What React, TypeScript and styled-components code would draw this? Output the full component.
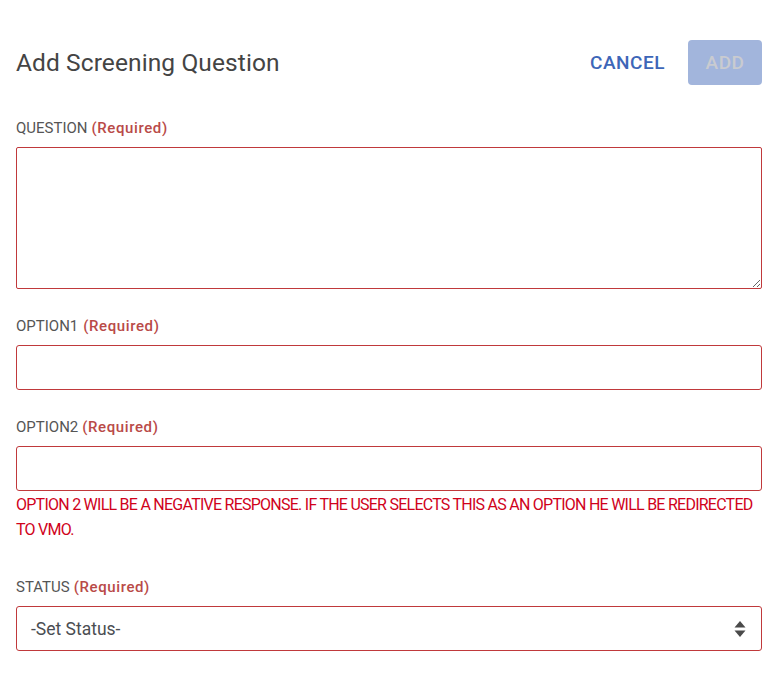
import React from "react";
import styled, { createGlobalStyle } from "styled-components";

const Global = createGlobalStyle`
  html, body { margin: 0; padding: 0; background: #fff; }
  body { font-family: Roboto, "Noto Sans", sans-serif; }
  * { box-sizing: border-box; }
`;

const Page = styled.div`
  width: 773px;
  padding: 40px 11px 30px 16px;
`;

const Header = styled.div`
  display: flex;
  align-items: center;
  justify-content: space-between;
  height: 45px;
`;

const Title = styled.h1`
  margin: 0;
  font-size: 24.5px;
  font-weight: 400;
  color: #444;
  letter-spacing: 0.1px;
`;

const Actions = styled.div`
  display: flex;
  align-items: center;
  gap: 23px;
`;

const TextButton = styled.button`
  border: none;
  background: none;
  padding: 0;
  font-family: inherit;
  font-size: 19px;
  font-weight: 500;
  color: #3d66b8;
  letter-spacing: 0.5px;
`;

const PrimaryButton = styled.button<{ $disabled?: boolean }>`
  width: 74px;
  height: 45px;
  border: none;
  border-radius: 4px;
  background: ${(p) => (p.$disabled ? "#a2b5dc" : "#3d66b8")};
  color: ${(p) => (p.$disabled ? "#c9cbd0" : "#fff")};
  font-family: inherit;
  font-size: 19px;
  font-weight: 500;
  letter-spacing: 0.5px;
`;

const Field = styled.div<{ $top: number }>`
  margin-top: ${(p) => p.$top}px;
  display: flex;
  flex-direction: column;
`;

const Label = styled.label`
  font-size: 15px;
  color: #555;
  line-height: 18px;
  margin-bottom: 10px;
`;

const Req = styled.span<{ $gap?: number }>`
  color: #b94a48;
  font-weight: 500;
  letter-spacing: 0.6px;
  margin-left: ${(p) => p.$gap ?? 4}px;
`;

const TextArea = styled.textarea`
  width: 100%;
  height: 142px;
  border: 1px solid #c0393b;
  border-radius: 2px;
  resize: vertical;
  font-family: inherit;
  outline: none;
`;

const Input = styled.input`
  width: 100%;
  height: 45px;
  border: 1px solid #c0393b;
  border-radius: 3px;
  font-family: inherit;
  outline: none;
`;

const Warning = styled.p`
  margin: 1px 0 0;
  font-size: 16px;
  line-height: 25px;
  color: #d0021b;
  letter-spacing: -0.75px;
`;

const SelectBox = styled.div`
  width: 100%;
  height: 45px;
  border: 1px solid #c0393b;
  border-radius: 3px;
  display: flex;
  align-items: center;
  justify-content: space-between;
  padding: 0 15px 0 14px;
  font-size: 17.5px;
  color: #4a4d52;
`;

export default function App() {
  return (
    <Page>
      <Global />
      <Header>
        <Title>Add Screening Question</Title>
        <Actions>
          <TextButton>CANCEL</TextButton>
          <PrimaryButton $disabled>ADD</PrimaryButton>
        </Actions>
      </Header>
      <Field $top={34}>
        <Label>
          QUESTION<Req>(Required)</Req>
        </Label>
        <TextArea />
      </Field>
      <Field $top={28}>
        <Label>
          OPTION1<Req $gap={5}>(Required)</Req>
        </Label>
        <Input />
      </Field>
      <Field $top={28}>
        <Label>
          OPTION2<Req>(Required)</Req>
        </Label>
        <Input />
        <Warning>
          OPTION 2 WILL BE A NEGATIVE RESPONSE. IF THE USER SELECTS THIS AS AN OPTION HE WILL BE REDIRECTED TO VMO.
        </Warning>
      </Field>
      <Field $top={36}>
        <Label>
          STATUS<Req>(Required)</Req>
        </Label>
        <SelectBox>
          <span>-Set Status-</span>
          <svg width="12" height="18" viewBox="0 0 12 18">
            <path d="M6 1 L11.5 7.5 H0.5 Z" fill="#4a4a4a" />
            <path d="M6 17 L11.5 10.5 H0.5 Z" fill="#4a4a4a" />
          </svg>
        </SelectBox>
      </Field>
    </Page>
  );
}
